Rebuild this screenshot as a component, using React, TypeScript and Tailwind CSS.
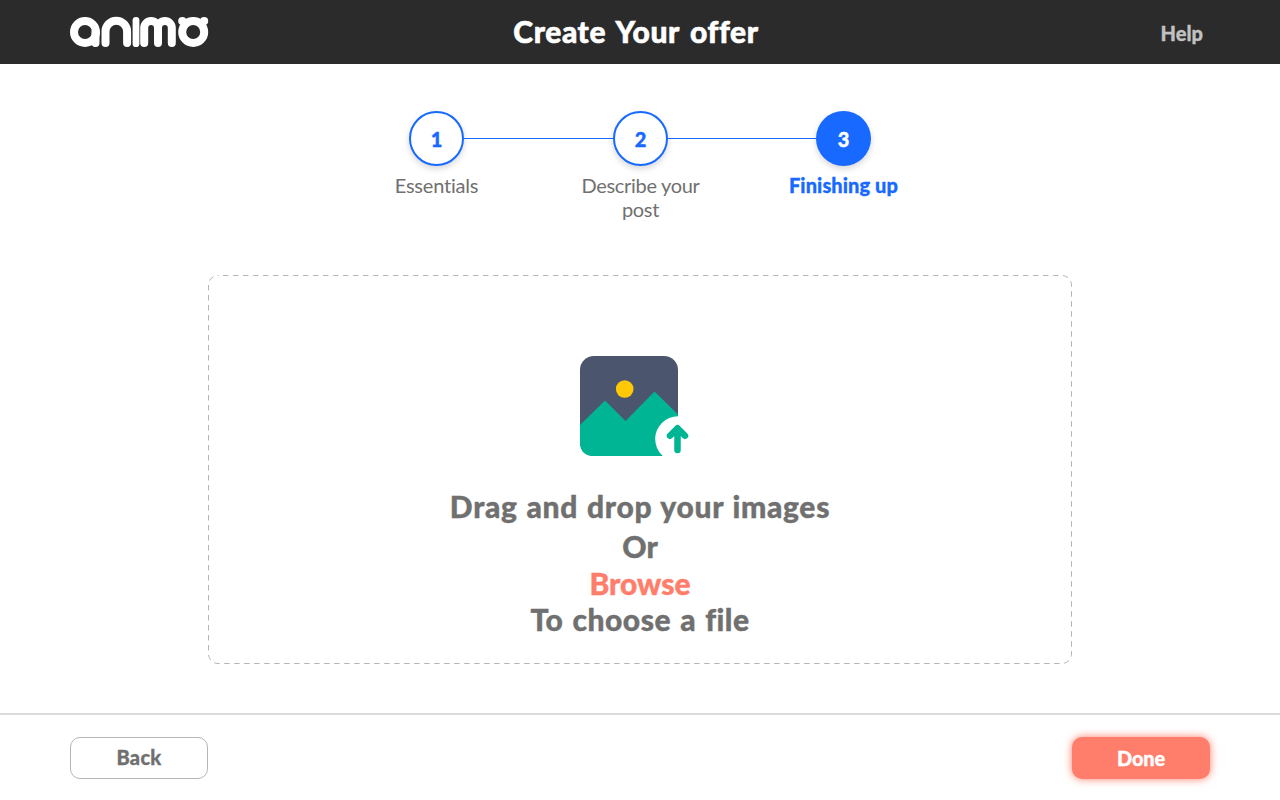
const steps = [
  { id: 1, label: 'Essentials', style: 'w-[86px] tracking-[-0.2px]' },
  { id: 2, label: 'Describe your post', style: 'w-[130px] tracking-[-0.3px]' },
  { id: 3, label: 'Finishing up', style: 'w-[130px] tracking-[0.1px] font-black text-[#1769ff] [-webkit-text-stroke:0.3px]' },
];

function Logo() {
  return (
    <svg aria-label="animo" className="h-8 w-[140px]" viewBox="69 16 140 32" fill="none" stroke="white" strokeWidth="8" strokeLinecap="round">
      <circle cx="85" cy="32" r="11" />
      <path d="M95.5 32V43M105.5 43V31.5a10.8 10.8 0 0 1 21.6 0V43" />
      <path d="M136 20.3V43.7" strokeWidth="6.8" />
      <path d="M144.2 43V28a6.9 6.9 0 0 1 13.8 0V43M158 43V28a6.9 6.9 0 0 1 13.8 0V43" />
      <circle cx="193.2" cy="32" r="11" />
      <circle cx="182.3" cy="21" r="4.1" fill="white" stroke="none" />
      <circle cx="204.1" cy="21" r="4.1" fill="white" stroke="none" />
    </svg>
  );
}

function UploadIcon() {
  return (
    <svg className="block h-[100px] w-[110px]" viewBox="0 0 110 100">
      <rect width="98" height="100" rx="14" fill="#4b566e" />
      <path d="M0 69L25 44.5L45.5 65L74.5 35.5L98 58.5V100H14Q0 100 0 86Z" fill="#00b594" />
      <circle cx="44.7" cy="33" r="8.8" fill="#ffca05" />
      <circle cx="98" cy="83" r="22.8" fill="white" />
      <path d="M97.5 94V72.5M90 79.8L97.5 72.3L105 79.8" fill="none" stroke="#00b594" strokeWidth="6.5" strokeLinecap="round" strokeLinejoin="round" />
    </svg>
  );
}

export default function App() {
  return (
    <div className="flex h-[800px] w-full flex-col overflow-hidden bg-white font-['Lato','Liberation_Sans',sans-serif] text-[#707070]">
      <header className="grid h-16 shrink-0 grid-cols-[1fr_auto_1fr] items-center bg-[#2b2b2b] pr-[77px] pl-[69px]">
        <Logo />
        <h1 className="pb-0.5 text-[30px] leading-9 font-black tracking-[0.6px] text-white [-webkit-text-stroke:0.6px] [word-spacing:3px]">Create Your offer</h1>
        <a className="justify-self-end pt-0.5 text-xl leading-6 font-black text-[#c1c1c1] [-webkit-text-stroke:0.3px]">Help</a>
      </header>

      <main className="flex flex-1 flex-col items-center pt-[47px]">
        <ol className="flex h-[164px] items-start">
          {steps.map((step, i) => (
            <li key={step.id} className="flex items-start">
              {i > 0 && <div className={`mt-[27px] h-px bg-[#1769ff] ${i === 2 ? 'w-[148px]' : 'w-[149px]'}`} />}
              <div className="flex w-[55px] flex-col items-center">
                <div className={i === 2
                  ? 'flex size-[55px] items-center justify-center rounded-full bg-[#1769ff] text-xl font-black text-white shadow-[0_3px_6px_rgba(0,0,0,0.16)] [-webkit-text-stroke:0.4px]'
                  : 'flex size-[55px] items-center justify-center rounded-full border-2 border-[#1769ff] bg-white text-xl font-black text-[#1769ff] shadow-[0_3px_6px_rgba(0,0,0,0.16)] [-webkit-text-stroke:0.4px]'}>
                  {step.id}
                </div>
                <div className={`${step.style} mt-[7px] shrink-0 text-center text-xl leading-6`}>{step.label}</div>
              </div>
            </li>
          ))}
        </ol>
        <section className="relative flex h-[389px] w-[864px] flex-col items-center pt-[81px] text-[30px] leading-9 font-black [-webkit-text-stroke:0.4px]">
          <svg className="absolute inset-0 h-full w-full" viewBox="0 0 864 389" fill="none">
            <rect x="0.5" y="0.5" width="863" height="388" rx="9.5" stroke="#b5b5b5" strokeDasharray="5.5 4.5" strokeDashoffset="5" />
          </svg>
          <div className="pr-[10px]"><UploadIcon /></div>
          <p className="mt-8 tracking-[0.7px] [word-spacing:1px]">Drag and drop your images</p>
          <p className="mt-1">Or</p>
          <button className="mt-px text-[#ff7e6b]">Browse</button>
          <p className="tracking-[0.5px] [word-spacing:1.5px]">To choose a file</p>
        </section>
      </main>

      <footer className="flex h-[87px] shrink-0 items-start justify-between border-t-2 border-[#dbdbdb] px-[70px] pt-[22px] text-xl font-black [-webkit-text-stroke:0.3px]">
        <button className="flex h-[42px] w-[138px] items-center justify-center rounded-[10px] border border-[#b5b5b5] pb-0.5 tracking-[0.3px]">Back</button>
        <button className="flex h-[42px] w-[138px] items-center justify-center rounded-[10px] bg-[#ff7e6b] text-white shadow-[0_0_8px_#ff7e6b] tracking-[-0.2px]">Done</button>
      </footer>
    </div>
  );
}
